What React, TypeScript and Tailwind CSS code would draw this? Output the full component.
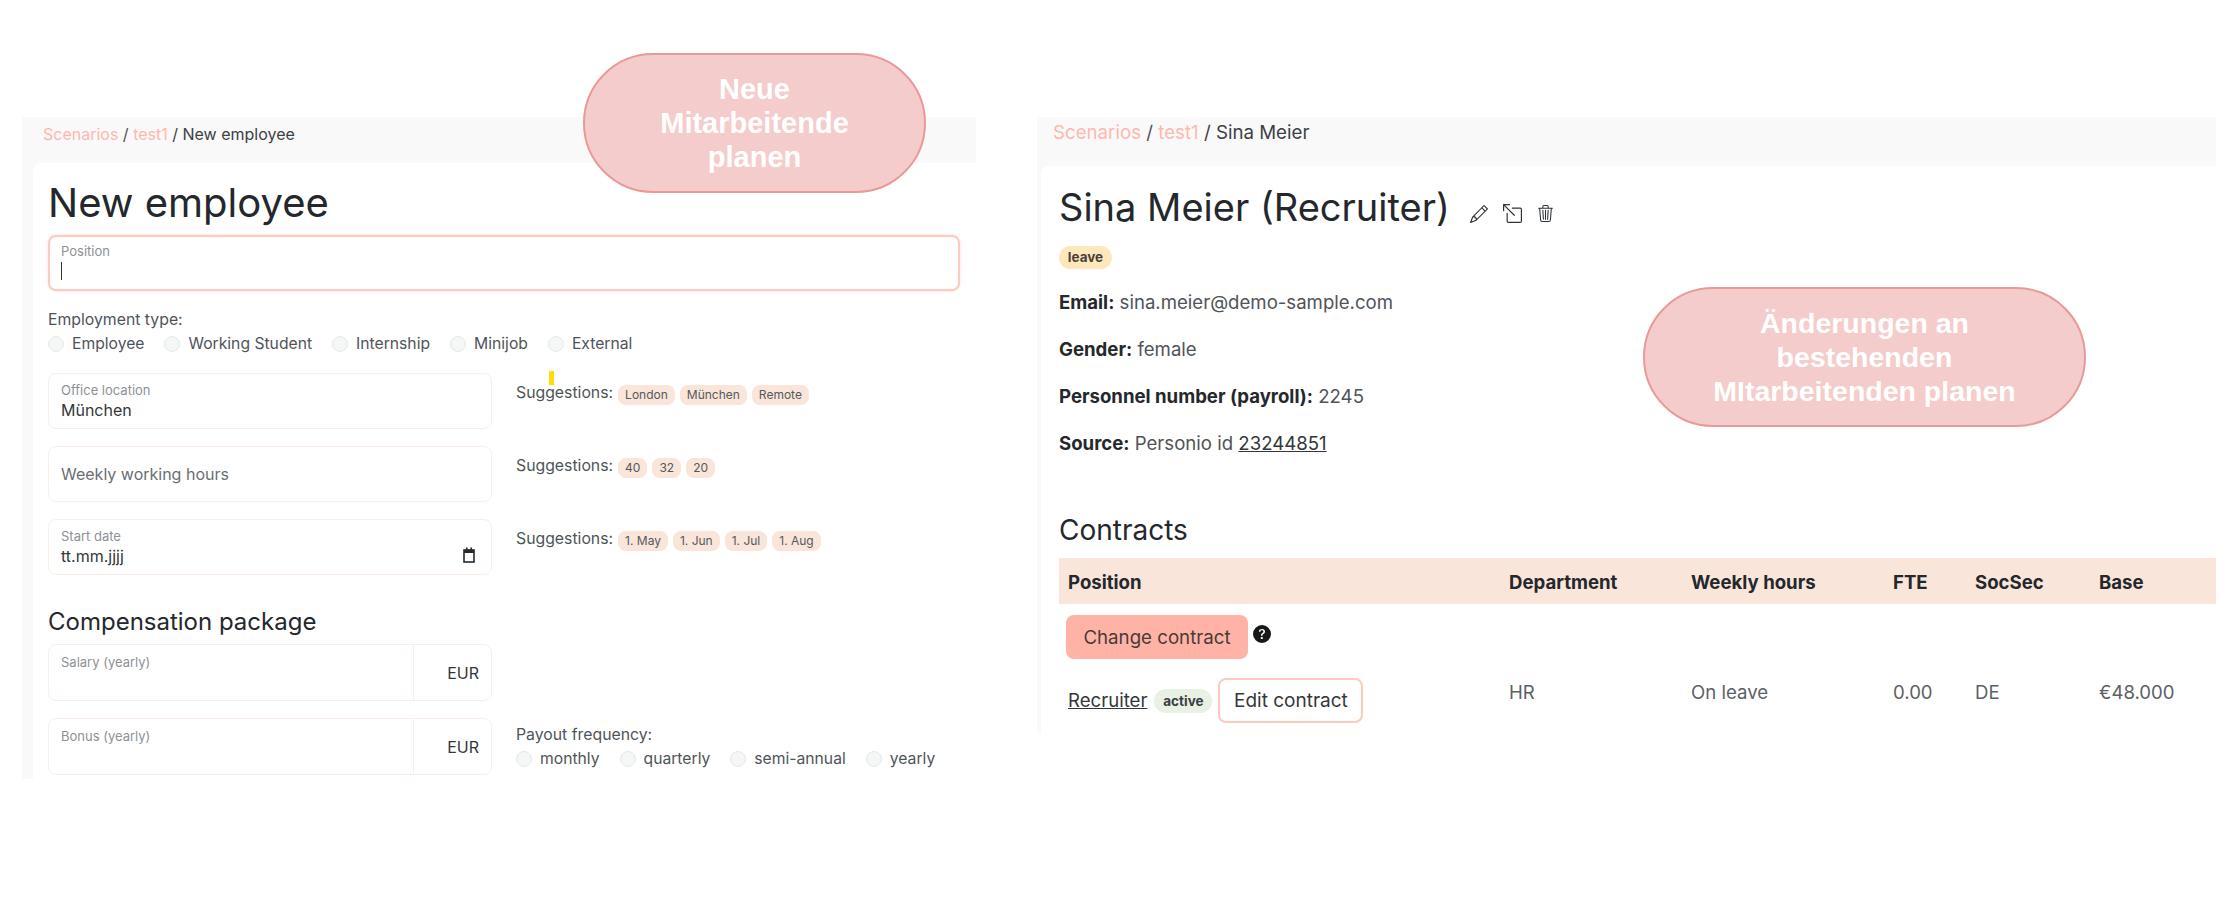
import React from 'react';
import { BsPencil, BsBoxArrowUpLeft, BsTrash3, BsQuestionCircleFill } from 'react-icons/bs';

const Chip: React.FC<{ label: string }> = ({ label }) => (
  <span className="h-5 px-[7px] rounded-lg bg-[#f9e5d9] text-[12px] leading-5 text-[#55595e]">{label}</span>
);

const Radio: React.FC<{ label: string }> = ({ label }) => (
  <label className="flex items-center gap-[8px] h-6 text-[15.7px] text-[#4f5459]">
    <span className="w-[16px] h-[16px] rounded-full bg-[#f5f6f6] border border-[#e6e8e8]" />
    {label}
  </label>
);

const Suggestions: React.FC<{ items: string[] }> = ({ items }) => (
  <div className="flex items-start gap-[5px] pt-[12px] text-[15.8px] text-[#4f5459]">
    <span className="leading-6 -mt-[4px]">Suggestions:</span>
    {items.map(i => <Chip key={i} label={i} />)}
  </div>
);

const Field: React.FC<{ label: string; value?: string; children?: React.ReactNode }> = ({ label, value, children }) => (
  <div className="relative h-[56px] rounded-lg border border-[#fbeeea] px-3 pt-[6px]">
    <div className="text-[13px] leading-5 text-[#8d9196]">{label}</div>
    <div className="text-[16px] leading-5 text-[#33373b]">{value}</div>
    {children}
  </div>
);

const MoneyField: React.FC<{ label: string }> = ({ label }) => (
  <div className="flex h-[57px] rounded-lg border border-[#fbeeea]">
    <div className="flex-1 px-3 pt-[7px] text-[13px] leading-5 text-[#8d9196]">{label}</div>
    <div className="w-[78px] border-l border-[#fbeeea] flex items-center justify-end pr-3 pt-[1px] text-[16px] text-[#33373b]">EUR</div>
  </div>
);

const Pill: React.FC<{ className: string; lines: string[] }> = ({ className, lines }) => (
  <div className={`absolute flex flex-col items-center justify-center rounded-[70px] bg-[#f4cccc] border-2 border-[#ea9999] font-['Liberation_Sans',sans-serif] font-bold leading-[34px] text-white ${className}`}>
    {lines.map(l => <span key={l}>{l}</span>)}
  </div>
);

const NewEmployee = () => (
  <section className="ml-[22px] w-[954px] h-[662px] bg-[#f9f9f9] pl-[11px] flex flex-col">
    <nav className="h-[46px] pl-[10px] pb-[12px] flex items-center text-[16px] text-[#ffb8ac]">
      Scenarios&nbsp;<span className="text-[#4f5459]">/</span>&nbsp;test1&nbsp;<span className="text-[#3d4146]">/ New employee</span>
    </nav>
    <div className="flex-1 bg-white rounded-tl-lg pl-[15px] pr-[16px] pt-[16px]">
      <h1 className="text-[40px] leading-[48px] text-[#24282c]">New employee</h1>
      <div className="mt-2 h-[56px] rounded-lg border-2 border-[#ffc9bf] shadow-[0_0_3px_#ffd9d2] px-[11px] pt-[4px]">
        <div className="text-[13px] leading-5 text-[#8d9196]">Position</div>
        <div className="w-px h-[18px] mt-[1px] bg-[#33373b]" />
      </div>
      <div className="mt-[17px] text-[15.8px] leading-6 text-[#4f5459]">Employment type:</div>
      <div className="flex gap-[20px]">
        {['Employee', 'Working Student', 'Internship', 'Minijob', 'External'].map(t => <Radio key={t} label={t} />)}
      </div>
      <div className="mt-[17px] grid grid-cols-[444px_1fr] gap-x-6 gap-y-[17px]">
        <Field label="Office location" value="München" />
        <div className="relative">
          <span className="absolute left-[33px] -top-[2px] w-[5px] h-[14px] bg-[#ffdd00]" />
          <Suggestions items={['London', 'München', 'Remote']} />
        </div>
        <div className="h-[56px] rounded-lg border border-[#fbeeea] px-3 flex items-center text-[16px] text-[#6a6e73]">Weekly working hours</div>
        <Suggestions items={['40', '32', '20']} />
        <Field label="Start date" value="tt.mm.jjjj">
          <svg className="absolute right-[16px] top-[27px]" width="12" height="16" viewBox="0 0 12 16" fill="none">
            <rect x="1" y="3" width="10" height="12" stroke="#24282c" strokeWidth="1.6" />
            <rect x="1" y="3" width="10" height="3" fill="#24282c" />
            <rect x="3" y="0.5" width="1.6" height="3" fill="#24282c" />
            <rect x="7.4" y="0.5" width="1.6" height="3" fill="#24282c" />
          </svg>
        </Field>
        <Suggestions items={['1. May', '1. Jun', '1. Jul', '1. Aug']} />
      </div>
      <h2 className="mt-[31px] text-[24px] leading-8 text-[#24282c]">Compensation package</h2>
      <div className="mt-[6px] grid grid-cols-[444px_1fr] gap-x-6 gap-y-[17px]">
        <MoneyField label="Salary (yearly)" />
        <div />
        <MoneyField label="Bonus (yearly)" />
        <div className="pt-[5px]">
          <div className="text-[15.8px] leading-6 text-[#4f5459]">Payout frequency:</div>
          <div className="flex gap-[20px]">
            {['monthly', 'quarterly', 'semi-annual', 'yearly'].map(t => <Radio key={t} label={t} />)}
          </div>
        </div>
      </div>
    </div>
  </section>
);

const InfoLine: React.FC<{ label: string; children: React.ReactNode }> = ({ label, children }) => (
  <p className="h-[27px] mb-5 text-[18.6px] leading-[27px] text-[#4f5459]">
    <b className="font-bold text-[#24282c]">{label}</b> {children}
  </p>
);

const Employee = () => (
  <section className="ml-[61px] w-[1179px] h-[616px] bg-[#f9f9f9] pl-[4px] flex flex-col">
    <nav className="h-[49px] pl-[12px] pb-[17px] flex items-center text-[18.7px] text-[#ffb8ac]">
      Scenarios&nbsp;<span className="text-[#4f5459]">/</span>&nbsp;test1&nbsp;<span className="text-[#3d4146]">/ Sina Meier</span>
    </nav>
    <div className="flex-1 bg-white rounded-tl-lg pl-[18px] pt-[17px]">
      <div className="flex items-center">
        <h1 className="text-[38px] leading-[48px] text-[#24282c]">Sina Meier (Recruiter)</h1>
        <div className="flex items-center ml-[20px] mt-[13px] text-[#2f3236]">
          <BsPencil size={18} />
          <BsBoxArrowUpLeft size={19} className="ml-[15px]" />
          <BsTrash3 size={17} className="ml-[15px]" />
        </div>
      </div>
      <span className="mt-[15px] block w-[53px] h-[23px] rounded-xl bg-[#fde8bd] text-center text-[13.5px] font-bold leading-[22px] text-[#4a4038]">leave</span>
      <div className="mt-[20px]">
        <InfoLine label="Email:">sina.meier@demo-sample.com</InfoLine>
        <InfoLine label="Gender:">female</InfoLine>
        <InfoLine label="Personnel number (payroll):">2245</InfoLine>
        <InfoLine label="Source:">Personio id <span className="underline text-[#33373b]">23244851</span></InfoLine>
      </div>
      <h2 className="mt-[55px] text-[28px] leading-9 text-[#24282c]">Contracts</h2>
      <div className="mt-[10px] h-[46px] pt-[3px] grid grid-cols-[441px_182px_202px_82px_124px_1fr] items-center pl-[9px] bg-[#f9e5d9] text-[18.6px] font-bold text-[#24282c]">
        <span>Position</span>
        <span>Department</span>
        <span>Weekly hours</span>
        <span>FTE</span>
        <span>SocSec</span>
        <span>Base</span>
      </div>
      <div className="mt-[11px] ml-[7px] flex items-start">
        <button className="w-[182px] h-[44px] pt-[2px] rounded-lg bg-[#ffb3a7] text-[18.7px] text-[#4a3a36]">Change contract</button>
        <BsQuestionCircleFill size={18} className="ml-[5px] mt-[10px] text-[#16181a]" />
      </div>
      <div className="mt-[19px] grid grid-cols-[441px_182px_202px_82px_124px_1fr] items-start pl-[9px] text-[18.6px] leading-[27px] text-[#5c6166]">
        <div className="flex items-center">
          <span className="underline text-[#33373b]">Recruiter</span>
          <span className="ml-[7px] w-[58px] h-[24px] rounded-xl bg-[#e9f0e4] text-center text-[13.5px] font-bold leading-[24px] text-[#3a3e42]">active</span>
          <button className="ml-[6px] w-[145px] h-[45px] rounded-lg border-2 border-[#ffc9bf] bg-white text-[19px] text-[#33373b]">Edit contract</button>
        </div>
        <span className="pt-px">HR</span>
        <span className="pt-px">On leave</span>
        <span className="pt-px">0.00</span>
        <span className="pt-px">DE</span>
        <span className="pt-px">€48.000</span>
      </div>
    </div>
  </section>
);

export default function App() {
  return (
    <div className="relative w-[2232px] h-[911px] overflow-hidden bg-white pt-[117px] flex items-start font-['Inter',sans-serif]">
      <NewEmployee />
      <Employee />
      <Pill className="left-[583px] top-[53px] w-[343px] h-[140px] text-[29px]" lines={['Neue', 'Mitarbeitende', 'planen']} />
      <Pill className="left-[1643px] top-[287px] w-[443px] h-[140px] text-[28.5px]" lines={['Änderungen an', 'bestehenden', 'MItarbeitenden planen']} />
    </div>
  );
}
